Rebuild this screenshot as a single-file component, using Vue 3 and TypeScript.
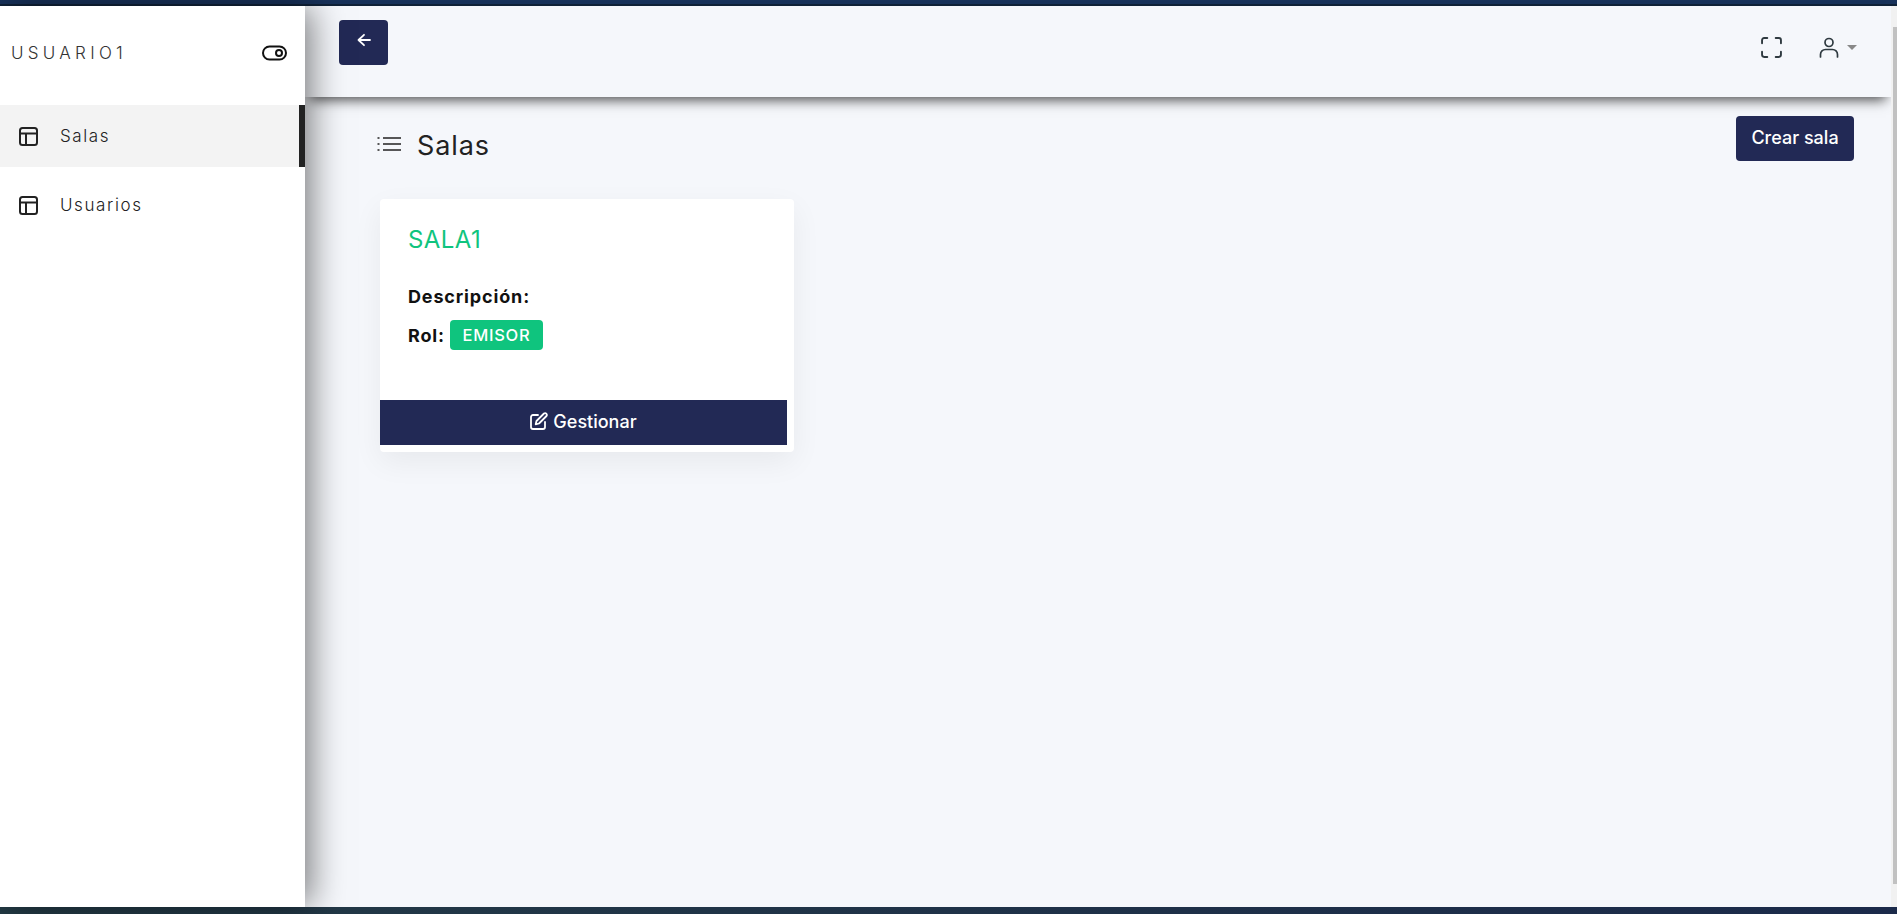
<script setup lang="ts">
const navItems: { label: string; active: boolean }[] = [
  { label: 'Salas', active: true },
  { label: 'Usuarios', active: false },
]
</script>

<template>
  <div class="screen">
    <div class="strip-top"></div>
    <div class="middle">
      <aside class="sidebar">
        <div class="brand">
          <span class="brand-name">USUARIO1</span>
          <svg class="toggle" viewBox="0 0 25 16" fill="none" stroke="#111" stroke-width="2">
            <rect x="1" y="1.5" width="23" height="13" rx="6.5" />
            <circle cx="17" cy="8" r="3" />
          </svg>
        </div>
        <nav class="nav">
          <div v-for="item in navItems" :key="item.label" class="nav-item" :class="{ active: item.active }">
            <svg class="nav-icon" viewBox="0 0 19 19" fill="none" stroke="#222" stroke-width="2">
              <rect x="1" y="1" width="17" height="17" rx="2.5" />
              <path d="M1 6.5h17M7 6.5V18" />
            </svg>
            <span>{{ item.label }}</span>
          </div>
        </nav>
      </aside>
      <div class="main">
        <header class="topbar">
          <button class="back">
            <svg viewBox="0 0 16 16" fill="none" stroke="#fff" stroke-width="1.8" stroke-linecap="round" stroke-linejoin="round">
              <path d="M14 8H2.5M8 2.8 2.5 8 8 13.2" />
            </svg>
          </button>
          <div class="top-actions">
            <svg class="full" viewBox="0 0 20 20" fill="none" stroke="#2f3a40" stroke-width="1.8" stroke-linecap="round" stroke-linejoin="round">
              <path d="M6 1H3a2 2 0 0 0-2 2v3M14 1h3a2 2 0 0 1 2 2v3M1 14v3a2 2 0 0 0 2 2h3M19 14v3a2 2 0 0 1-2 2h-3" />
            </svg>
            <div class="user">
              <svg class="user-icon" viewBox="0 0 20 21" fill="none" stroke="#2f3a40" stroke-width="1.7" stroke-linecap="round">
                <circle cx="10" cy="5.5" r="4" />
                <path d="M1.5 20v-2.5a5 5 0 0 1 5-5h7a5 5 0 0 1 5 5V20" />
              </svg>
              <span class="caret"></span>
            </div>
          </div>
        </header>
        <section class="content">
          <div class="title-row">
            <div class="title">
              <svg class="list-icon" viewBox="0 0 24 16" fill="none" stroke="#222" stroke-width="1.6">
                <path d="M6 2h18M6 8h18M6 14h18" />
                <path d="M.5 2h2M.5 8h2M.5 14h2" />
              </svg>
              <h1>Salas</h1>
            </div>
            <button class="create">Crear sala</button>
          </div>
          <article class="card">
            <div class="card-body">
              <h2>SALA1</h2>
              <p class="line first">Descripción:</p>
              <p class="line">Rol: <span class="badge">EMISOR</span></p>
            </div>
            <button class="manage">
              <svg viewBox="0 0 18 18" fill="none" stroke="#fff" stroke-width="1.8" stroke-linecap="round" stroke-linejoin="round">
                <path d="M8 3H3a2 2 0 0 0-2 2v10a2 2 0 0 0 2 2h10a2 2 0 0 0 2-2v-5" />
                <path d="M14 1.5a1.8 1.8 0 0 1 2.5 2.5L9 11.5l-3.3.8.8-3.3z" />
              </svg>
              Gestionar
            </button>
          </article>
        </section>
      </div>
      <div class="scrollbar"><div class="thumb"></div></div>
    </div>
    <div class="strip-bottom"></div>
  </div>
</template>

<style scoped>
.screen {
  width: 1897px;
  height: 914px;
  display: flex;
  flex-direction: column;
  overflow: hidden;
  background: #f5f7fb;
  font-family: "Inter", "Liberation Sans", sans-serif;
}
.strip-top {
  height: 6px;
  flex: none;
  background: #18325a;
  border-bottom: 2px solid #102238;
  box-sizing: border-box;
}
.strip-bottom {
  height: 7px;
  flex: none;
  background: linear-gradient(90deg, #233a45, #1b2a4a);
}
.middle {
  flex: 1;
  min-height: 0;
  display: flex;
}
.sidebar {
  width: 305px;
  flex: none;
  background: #fff;
  position: relative;
  z-index: 2;
  box-shadow: 8px 0 32px -2px rgba(0, 0, 0, 0.5);
}
.brand {
  height: 99px;
  padding: 0 18px 6px 11px;
  box-sizing: border-box;
  display: flex;
  align-items: center;
  justify-content: space-between;
}
.brand-name {
  font-size: 17px;
  font-weight: 300;
  letter-spacing: 4.3px;
  color: #333;
}
.toggle {
  width: 25px;
  height: 16px;
}
.nav-item {
  height: 62px;
  margin-bottom: 7px;
  padding-left: 19px;
  box-sizing: border-box;
  display: flex;
  align-items: center;
  gap: 22px;
  font-size: 17px;
  font-weight: 300;
  letter-spacing: 1.6px;
  color: #222;
}
.nav-item.active {
  background: #f3f3f3;
  border-right: 6px solid #222;
}
.nav-icon {
  width: 19px;
  height: 19px;
}
.main {
  flex: 1;
  min-width: 0;
  display: flex;
  flex-direction: column;
}
.topbar {
  height: 91px;
  flex: none;
  padding: 14px 34px 0 34px;
  box-sizing: border-box;
  display: flex;
  align-items: flex-start;
  justify-content: space-between;
  background: #f5f7fb;
  box-shadow: 0 8px 12px -5px rgba(0, 0, 0, 0.7);
}
.back {
  width: 49px;
  height: 45px;
  border: 0;
  border-radius: 4px;
  padding: 0 0 6px;
  background: #222955;
  display: flex;
  align-items: center;
  justify-content: center;
}
.back svg {
  width: 16px;
  height: 16px;
}
.top-actions {
  display: flex;
  align-items: center;
  gap: 37px;
  padding-top: 17px;
}
.full {
  width: 21px;
  height: 21px;
}
.user {
  display: flex;
  align-items: center;
  gap: 8px;
}
.user-icon {
  width: 20px;
  height: 21px;
}
.caret {
  width: 0;
  height: 0;
  border-left: 5.5px solid transparent;
  border-right: 5.5px solid transparent;
  border-top: 5.5px solid #888;
}
.content {
  padding: 19px 37px 0 75px;
}
.title-row {
  height: 45px;
  display: flex;
  align-items: flex-start;
  justify-content: space-between;
}
.title {
  display: flex;
  align-items: center;
  gap: 16px;
  margin-top: 11px;
  margin-left: -3px;
}
.list-icon {
  width: 24px;
  height: 16px;
  margin-top: -5px;
}
h1 {
  margin: 0;
  font-size: 27px;
  line-height: 38px;
  font-weight: 400;
  letter-spacing: 0.9px;
  color: #222;
}
.create {
  width: 118px;
  height: 45px;
  border: 0;
  border-radius: 4px;
  padding: 0 0 2px;
  background: #222955;
  color: #fff;
  font-family: "Inter", sans-serif;
  font-size: 18px;
  font-weight: 500;
}
.card {
  width: 414px;
  height: 253px;
  margin-top: 38px;
  background: #fff;
  border-radius: 4px;
  box-shadow: 0 10px 30px rgba(0, 0, 0, 0.06);
  box-sizing: border-box;
  padding-right: 7px;
  display: flex;
  flex-direction: column;
}
.card-body {
  height: 201px;
  padding: 25px 0 0 28px;
  box-sizing: border-box;
}
h2 {
  margin: 0;
  font-size: 24px;
  line-height: 32px;
  font-weight: 400;
  letter-spacing: 0.4px;
  color: #0fc47e;
}
.line {
  margin: 0;
  display: flex;
  align-items: center;
  gap: 5px;
  height: 30px;
  margin-top: 9px;
  font-size: 18px;
  font-weight: 700;
  letter-spacing: 0.85px;
  color: #111;
}
.line.first {
  margin-top: 25px;
}
.badge {
  width: 93px;
  height: 30px;
  border-radius: 4px;
  background: #0fc47e;
  color: #fff;
  font-size: 16.5px;
  font-weight: 500;
  letter-spacing: 0.7px;
  display: flex;
  align-items: center;
  justify-content: center;
}
.manage {
  height: 45px;
  border: 0;
  padding: 0 0 2px;
  background: #222955;
  color: #fff;
  font-family: "Inter", sans-serif;
  font-size: 18px;
  font-weight: 500;
  display: flex;
  align-items: center;
  justify-content: center;
  gap: 5px;
}
.manage svg {
  width: 18px;
  height: 18px;
  margin-top: -2px;
}
.scrollbar {
  width: 6px;
  flex: none;
  background: #f1f1f1;
  padding: 21px 0 23px 2px;
  box-sizing: border-box;
  position: relative;
  z-index: 1;
}
.thumb {
  height: 100%;
  background: #c1c1c1;
}
</style>
